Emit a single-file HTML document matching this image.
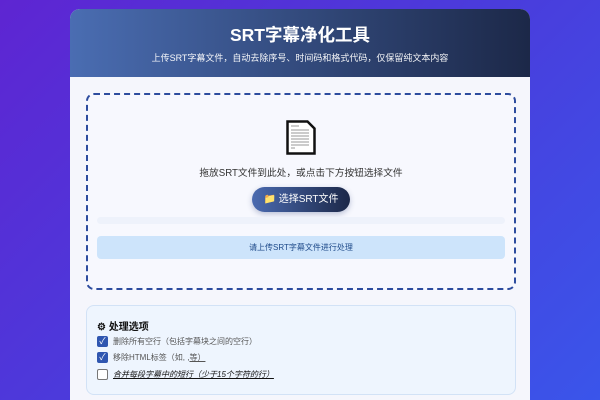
<!DOCTYPE html>
<html><head><meta charset="utf-8"><style>
*{margin:0;padding:0;box-sizing:border-box}
html,body{width:600px;height:400px;overflow:hidden}
body{font-family:"Liberation Sans","Noto Sans CJK SC",sans-serif;background:linear-gradient(135deg,#5e25d2 0%,#4a3cdc 50%,#3a55ea 100%);position:relative}
.card{position:absolute;left:70px;top:9px;width:460px;height:391px;background:#f5f6fc;border-radius:10px 10px 0 0;overflow:hidden}
.hdr{height:68px;background:linear-gradient(90deg,#4a6db2,#1c2848);color:#fff;text-align:center}
.hdr h1{font-size:17.5px;font-weight:bold;padding-top:15px;line-height:22px}
.hdr p{font-size:9px;margin-top:5px;opacity:.95}
.drop{position:absolute;left:16px;top:84px;width:430px;height:197px;border:2px dashed #2d4c9e;border-radius:8px;background:#f7f8fe}
.txt{position:absolute;top:70px;width:100%;text-align:center;font-size:9.7px;color:#333}
.btn{position:absolute;left:164px;top:92px;width:98px;height:25px;border-radius:13px;background:linear-gradient(90deg,#4a6ab0,#1c2848);color:#fff;font-size:10px;text-align:center;line-height:25px;box-shadow:0 2px 6px rgba(40,60,120,.3)}
.strip{position:absolute;left:9px;top:122px;width:408px;height:7px;background:#eef2fb;border-radius:4px}
.status{position:absolute;left:9px;top:141px;width:408px;height:23px;background:#cde4fb;border-radius:4px;text-align:center;line-height:23px;font-size:8px;color:#1e4a8a}
.opt{position:absolute;left:16px;top:296px;width:430px;height:90px;background:#eef5fe;border:1px solid #d2e2f6;border-radius:8px}
.opt h3{position:absolute;left:10px;top:12px;font-size:10px;font-weight:bold;color:#111}
.row{position:absolute;left:10px;font-size:8px;color:#555;display:flex;align-items:center}
.cb{width:11px;height:11px;border-radius:2px;margin-right:5px;display:inline-block}
.on{background:#2f56b0;color:#fff;font-size:9px;line-height:11px;text-align:center}
.off{border:1px solid #777;background:#fff}
</style></head><body>
<div class="card">
<div class="hdr"><h1>SRT字幕净化工具</h1><p>上传SRT字幕文件，自动去除序号、时间码和格式代码，仅保留纯文本内容</p></div>
<div class="drop">
<svg style="position:absolute;left:198px;top:25px" width="30" height="35" viewBox="0 0 30 35"><path d="M1.5 1.5h20l7 7v25h-27z" fill="#fff" stroke="#111" stroke-width="2.5"/><g stroke="#999" stroke-width="1"><path d="M5 6h8M5 10h18M5 13h18M5 16h18M5 19h18M5 22h18M5 25h18M5 28h4"/></g></svg>
<div class="txt">拖放SRT文件到此处，或点击下方按钮选择文件</div>
<div class="btn">📁 选择SRT文件</div>
<div class="strip"></div>
<div class="status">请上传SRT字幕文件进行处理</div>
</div>
<div class="opt">
<h3>⚙ 处理选项</h3>
<div class="row" style="top:30px"><span class="cb on">✓</span>删除所有空行（包括字幕块之间的空行）</div>
<div class="row" style="top:46px"><span class="cb on">✓</span>移除HTML标签（如, , <u>等）</u></div>
<div class="row" style="top:63px;color:#111;font-style:italic;text-decoration:underline"><span class="cb off"></span>合并每段字幕中的短行（少于15个字符的行）</div>
</div>
</div>
</body></html>
